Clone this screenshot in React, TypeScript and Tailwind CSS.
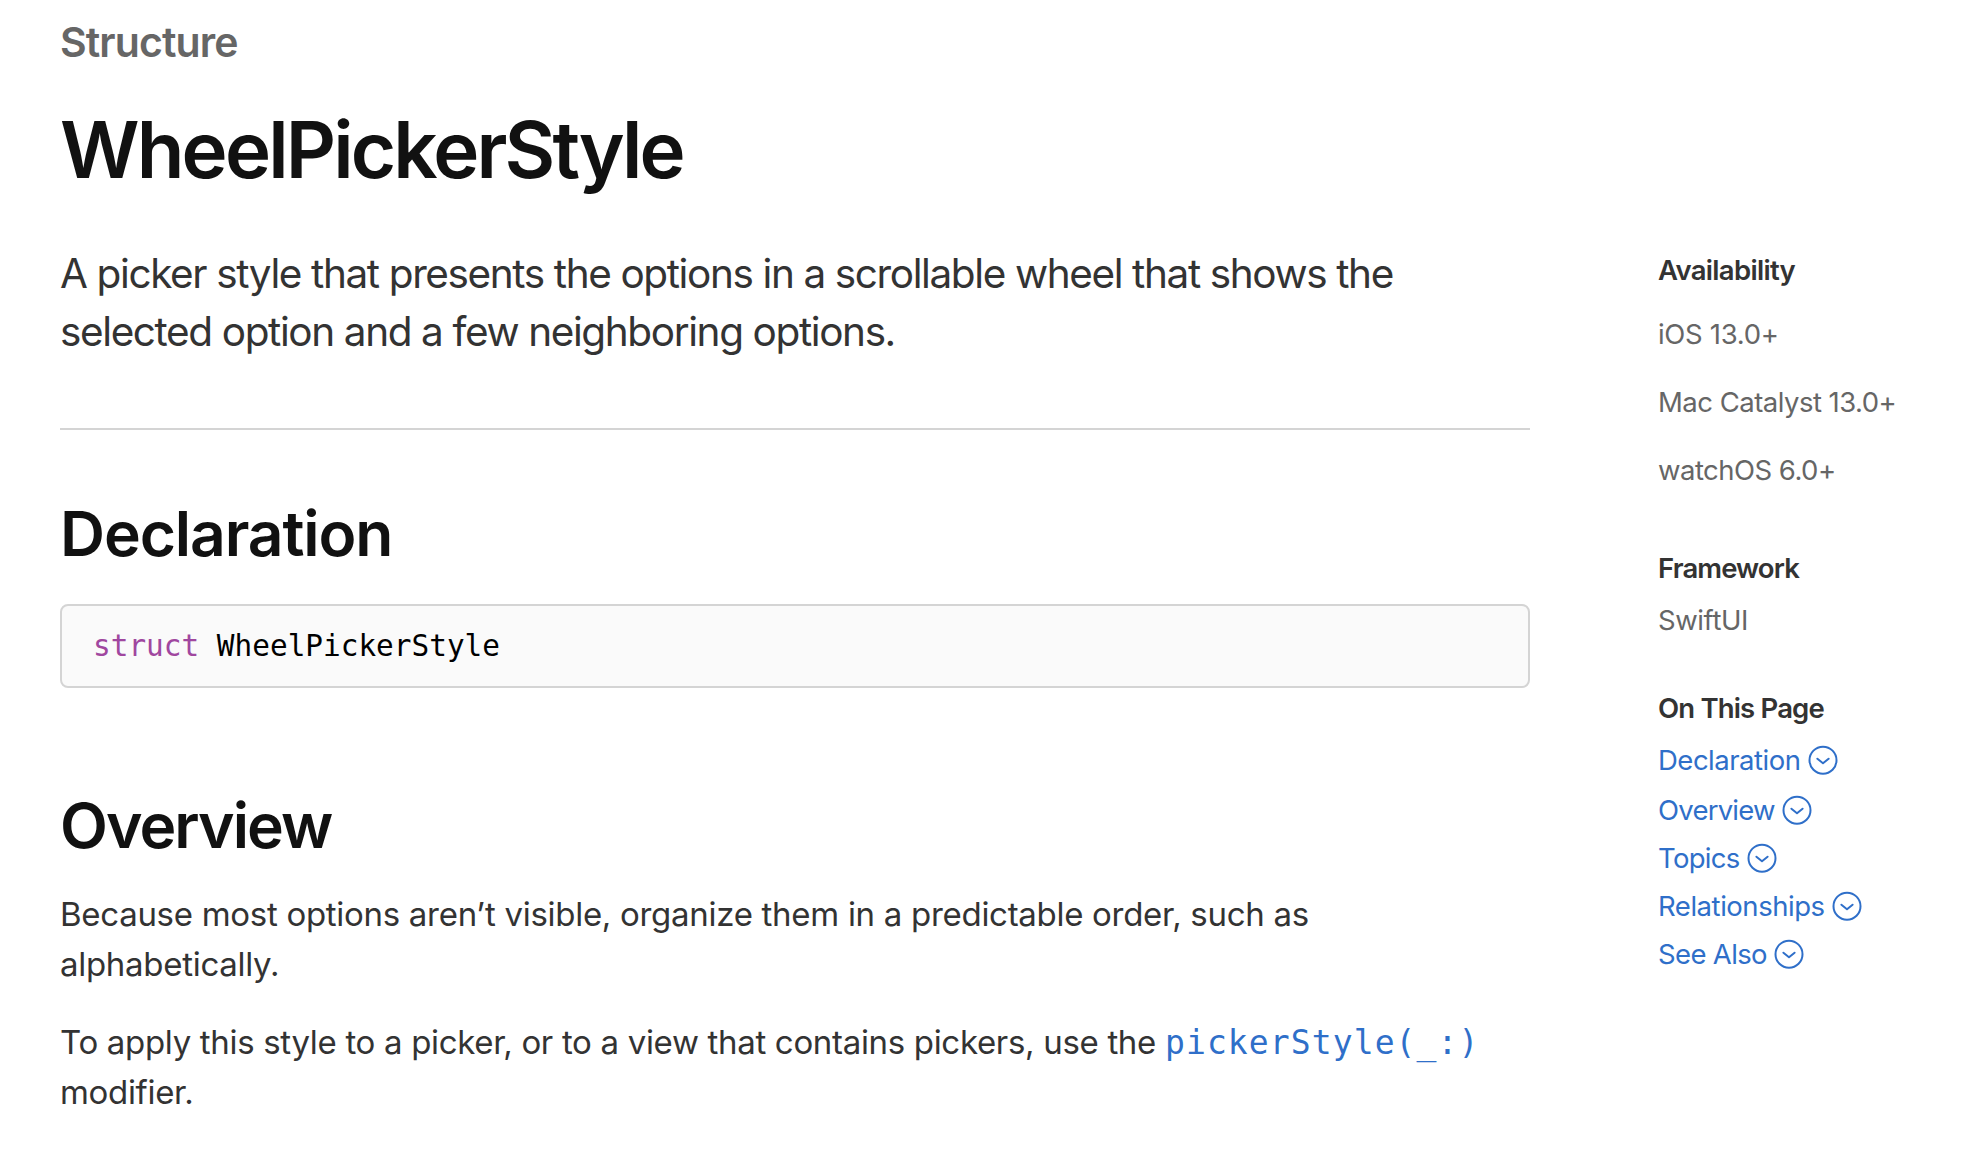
function ChevronCircle() {
  return (
    <svg
      className="ml-[7.5px] h-[30px] w-[30px] shrink-0"
      viewBox="0 0 30 30"
      fill="none"
      stroke="currentColor"
      strokeWidth="2"
      strokeLinecap="round"
      strokeLinejoin="round"
    >
      <circle cx="15" cy="15.2" r="13.5" />
      <path d="M9.4 13.7L15 18.2L20.6 13.7" />
    </svg>
  );
}

const availability = [
  { name: "iOS 13.0+", cls: "tracking-[-0.3px]" },
  { name: "Mac Catalyst 13.0+", cls: "tracking-[-0.52px]" },
  { name: "watchOS 6.0+", cls: "tracking-[-0.53px]" },
];

const sections = [
  { name: "Declaration", cls: "mt-3 tracking-[-0.5px]" },
  { name: "Overview", cls: "mt-2.5 tracking-[-0.78px]" },
  { name: "Topics", cls: "mt-2 tracking-[-0.7px]" },
  { name: "Relationships", cls: "mt-2 tracking-[-0.46px]" },
  { name: "See Also", cls: "mt-2 tracking-[-0.65px]" },
];

export default function App() {
  return (
    <div className="flex h-[1176px] w-[1974px] overflow-hidden bg-white font-['Inter',sans-serif] text-[#333333]">
      <main className="ml-[60px] w-[1470px] shrink-0 pt-3">
        <p className="text-[41px] font-semibold leading-[60px] tracking-[-0.9px] text-[#666666]">Structure</p>
        <h1 className="mt-9 text-[78px] font-semibold leading-[84px] tracking-[-2.85px] text-[#111111]">
          WheelPickerStyle
        </h1>
        <p className="mt-[53px] whitespace-nowrap text-[40.5px] leading-[58px] tracking-[-1.385px]">
          A picker style that presents the options in a scrollable wheel that shows the
          <br />
          selected option and a few neighboring options.
        </p>
        <hr className="mt-[67px] h-[2px] border-0 bg-[#d4d4d4]" />
        <h2 className="mt-[70px] text-[62.3px] font-semibold leading-[68px] tracking-[-1.1px] text-[#111111]">
          Declaration
        </h2>
        <div className="mt-9 flex h-[84px] items-center whitespace-pre rounded-lg border-2 border-[#d4d4d4] bg-[#fafafa] pl-[31px] font-['DejaVu_Sans_Mono',monospace] text-[29.4px] text-black">
          <span className="text-[#a0479f]">struct</span>
          <span> WheelPickerStyle</span>
        </div>
        <h2 className="mt-[104px] text-[62.3px] font-semibold leading-[68px] tracking-[-1.95px] text-[#111111]">
          Overview
        </h2>
        <p className="mt-[29px] whitespace-nowrap text-[33px] leading-[50px] tracking-[-0.29px]">
          Because most options aren’t visible, organize them in a predictable order, such as
          <br />
          alphabetically.
        </p>
        <p className="mt-[28px] whitespace-nowrap text-[33px] leading-[50px] tracking-[-0.32px]">
          To apply this style to a picker, or to a view that contains pickers, use the{" "}
          <a className="font-['DejaVu_Sans_Mono',monospace] text-[33px] leading-none tracking-[1.1px] text-[#2f6fc9]">
            pickerStyle(_:)
          </a>
          <br />
          modifier.
        </p>
      </main>
      <aside className="ml-[128px] whitespace-nowrap pt-[250px] text-[27.5px] leading-10 tracking-[-0.4px] text-[#666666]">
        <h3 className="font-semibold tracking-[-0.68px] text-[#333333]">Availability</h3>
        <ul className="mt-6 flex flex-col gap-7">
          {availability.map((a) => (
            <li key={a.name} className={a.cls}>
              {a.name}
            </li>
          ))}
        </ul>
        <h3 className="mt-[58px] font-semibold tracking-[-0.9px] text-[#333333]">Framework</h3>
        <p className="mt-3">SwiftUI</p>
        <h3 className="mt-12 font-semibold tracking-[-0.83px] text-[#333333]">On This Page</h3>
        <nav className="text-[#2f6fc9]">
          {sections.map((s) => (
            <a key={s.name} className={`flex items-center ${s.cls}`}>
              {s.name}
              <ChevronCircle />
            </a>
          ))}
        </nav>
      </aside>
    </div>
  );
}
